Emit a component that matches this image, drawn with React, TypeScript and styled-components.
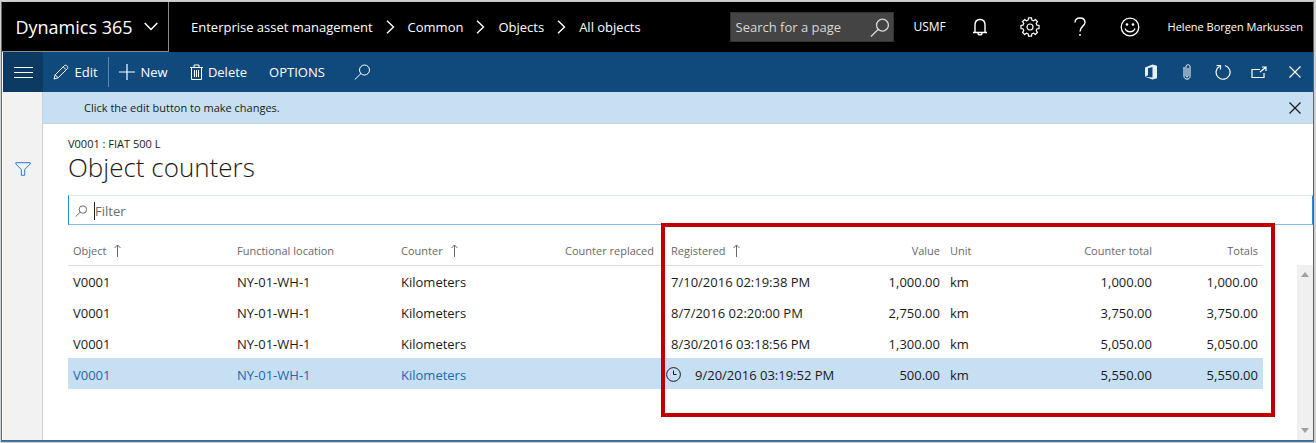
import React from "react";
import styled, { createGlobalStyle, css } from "styled-components";

const Global = createGlobalStyle`
  *, *::before, *::after { box-sizing: border-box; }
  body {
    margin: 0;
    background: #d0d0d0;
    color: #1a1a1a;
    font: 13px/20px "Open Sans", "Noto Sans", "Liberation Sans", sans-serif;
  }
  button, input { font: inherit; color: inherit; }
  svg { display: block; flex: none; }
`;

const Page = styled.div`
  min-height: 100vh;
  display: flex;
  flex-direction: column;
  padding: 1px 2px 2px 1px;
`;

const Window = styled.div`
  flex: 1;
  display: flex;
  flex-direction: column;
  border: 1px solid #5f6368;
  border-left-color: #2b7cc0;
  border-top-color: #c8c8c8;
  background: #fff;
  box-shadow: 0 1px 0 #2b7cc0;
`;

const Header = styled.header`
  display: flex;
  align-items: center;
  height: 50px;
  background: #000;
  color: #fff;
`;

const iconButton = css`
  display: flex;
  align-items: center;
  justify-content: center;
  padding: 0;
  border: 0;
  background: transparent;
  color: inherit;
  cursor: pointer;
`;

const Brand = styled.button`
  ${iconButton}
  width: 167px;
  height: 50px;
  padding-left: 3px;
  gap: 11px;
  border: 1px solid #8a8a8a;
  border-width: 0 1px 1px 0;
  font-size: 18px;
`;

const Crumbs = styled.nav`
  display: flex;
  flex: 1;
  align-items: center;
  gap: 12px;
  padding-left: 22px;
  white-space: nowrap;
`;

const Crumb = styled.a`
  color: inherit;
  text-decoration: none;
`;

const PageSearch = styled.label`
  display: flex;
  align-items: center;
  width: 164px;
  height: 30px;
  padding: 0 4px 0 5px;
  border: 1px solid #333;
  background: #444;
  color: #d8d8d8;
`;

const BareInput = styled.input`
  flex: 1;
  min-width: 0;
  padding: 0;
  border: 0;
  outline: 0;
  background: transparent;
  &::placeholder { color: inherit; opacity: 1; }
`;

const Company = styled.span`
  width: 72px;
  text-align: center;
  font-size: 12px;
`;

const HeaderIcon = styled.button`
  ${iconButton}
  width: 50px;
  height: 50px;
`;

const HeaderIcons = styled.div`
  display: flex;
  margin-left: -11px;
`;

const UserName = styled.span`
  padding: 0 10px 0 13px;
  font-size: 11px;
  white-space: nowrap;
`;

const Toolbar = styled.div`
  display: flex;
  align-items: center;
  height: 40px;
  margin-left: 1px;
  background: #104a7c;
  color: #fff;
`;

const MenuButton = styled.button`
  ${iconButton}
  width: 40px;
  height: 40px;
  background: #0d3a63;
`;

const Command = styled.button<{ $width: number; $divided?: boolean }>`
  ${iconButton}
  width: ${(p) => p.$width}px;
  height: 30px;
  gap: 5px;
  border-right: ${(p) => (p.$divided ? "1px solid #5f86aa" : "0")};
`;

const ToolIcons = styled.div`
  display: flex;
  margin-left: auto;
`;

const ToolIcon = styled.button`
  ${iconButton}
  width: 36px;
  height: 40px;
`;

const Body = styled.div`
  display: flex;
  flex: 1;
  margin-left: 1px;
`;

const Sidebar = styled.aside`
  display: flex;
  flex-direction: column;
  width: 40px;
  padding-top: 67px;
  border-right: 1px solid #cfcfcf;
  background: #f2f2f2;
  color: #2b7cd3;
`;

const SidebarButton = styled.button`
  ${iconButton}
  height: 20px;
`;

const Main = styled.main`
  display: flex;
  flex: 1;
  flex-direction: column;
  min-width: 0;
`;

const Message = styled.div`
  display: flex;
  align-items: center;
  justify-content: space-between;
  height: 32px;
  padding: 0 0 0 41px;
  border-bottom: 1px solid #c9d3da;
  background: #c7dff3;
  font-size: 11px;
`;

const Heading = styled.div`
  padding: 11px 0 0 25px;
`;

const RecordName = styled.div`
  font-size: 11px;
  line-height: 18px;
`;

const Title = styled.h1`
  margin: 0;
  font-size: 26px;
  font-weight: 300;
  line-height: 28px;
`;

const FilterBox = styled.label`
  display: flex;
  align-items: center;
  height: 30px;
  margin: 14px 0 0 25px;
  padding: 1px 0 0 6px;
  gap: 7px;
  border: 1px solid #2b88d8;
  border-top-color: #d4e8f8;
  border-bottom-color: #85bbe6;
  color: #6b6b6b;
`;

const Caret = styled.span`
  width: 1px;
  height: 18px;
  margin-right: -7px;
  background: #222;
`;

const GridArea = styled.section`
  display: flex;
  flex: 1;
  align-items: stretch;
  padding-left: 25px;
`;

const GridFrame = styled.div`
  position: relative;
  flex: 1;
  align-self: flex-start;
  padding-bottom: 28px;
`;

const Highlight = styled.div`
  position: absolute;
  top: -2px;
  right: -12px;
  bottom: 0;
  left: calc(50% - 5px);
  border: 4px solid #c00000;
  pointer-events: none;
`;

const Grid = styled.table`
  width: 100%;
  table-layout: fixed;
  border-collapse: collapse;
`;

const HeadCell = styled.th<{ $right?: boolean }>`
  height: 40px;
  padding: 12px 5px 0;
  border-bottom: 1px solid #dcdcdc;
  color: #686868;
  font-size: 11px;
  font-weight: 400;
  text-align: ${(p) => (p.$right ? "right" : "left")};
  white-space: nowrap;
`;

const HeadLabel = styled.span`
  display: inline-flex;
  align-items: center;
  gap: 8px;
`;

const Cell = styled.td<{ $right?: boolean; $link?: boolean }>`
  height: 31px;
  padding: 2px 5px 0;
  color: ${(p) => (p.$link ? "#1d68b0" : "inherit")};
  text-align: ${(p) => (p.$right ? "right" : "left")};
  white-space: nowrap;
`;

const Row = styled.tr<{ $selected?: boolean }>`
  background: ${(p) => (p.$selected ? "#c7dff3" : "transparent")};
`;

const Stamp = styled.span`
  display: flex;
  align-items: center;
  gap: 14px;
  margin-left: -5px;
`;

const ScrollTrack = styled.div`
  display: flex;
  flex-direction: column;
  justify-content: space-between;
  align-items: center;
  width: 16px;
  margin: 40px 0 0 34px;
  padding: 7px 0;
  background: #f0f0f0;
  color: #a0a0a0;
`;

type IconProps = { d: string; w?: number; h?: number; sw?: number; box?: string };
const Icon = ({ d, w = 16, h = w, sw = 1, box }: IconProps) => (
  <svg width={w} height={h} viewBox={box || `0 0 ${w} ${h}`} fill="none" stroke="currentColor" strokeWidth={sw} aria-hidden="true">
    <path d={d} />
  </svg>
);

const lens = "M10.500 1a5 5 0 1 1 0 10a5 5 0 0 1 0-10M7 9.500L.8 15.500";

const Gear = () => {
  const points: string[] = [];
  for (let i = 0; i < 8; i++) {
    [[-14, 7.200], [-10, 9.200], [10, 9.200], [14, 7.200]].forEach(([offset, radius]) => {
      const angle = ((i * 45 + offset) * Math.PI) / 180;
      points.push(`${(10 + radius * Math.sin(angle)).toFixed(2)},${(10 - radius * Math.cos(angle)).toFixed(2)}`);
    });
  }
  return (
    <svg width="20" height="20" viewBox="0 0 20 20" fill="none" stroke="currentColor" strokeWidth="1.200" strokeLinejoin="round" aria-hidden="true">
      <polygon points={points.join(" ")} />
      <circle cx="10" cy="10" r="3" />
    </svg>
  );
};

const Smile = () => (
  <svg width="20" height="20" viewBox="0 0 20 20" fill="none" stroke="currentColor" strokeWidth="1.300" aria-hidden="true">
    <circle cx="10" cy="10" r="8.800" />
    <path d="M5 11.500c1.500 4.300 8.500 4.300 10 0" />
    <circle cx="7" cy="7.500" r="1.300" fill="currentColor" stroke="none" />
    <circle cx="13" cy="7.500" r="1.300" fill="currentColor" stroke="none" />
  </svg>
);

const Office = () => (
  <svg width="14" height="16" viewBox="0 0 14 16" fill="#e4f0fa" aria-hidden="true">
    <path fillRule="evenodd" d="M1 3.500L8.500.5L13 1.800V14.200L8.500 15.500L1 12.800L8.500 13.500V3L4 4.200V11.300L1 12.800Z" />
  </svg>
);

const columns = [
  { label: "Object", width: 164, sort: true },
  { label: "Functional location", width: 164 },
  { label: "Counter", width: 164, sort: true },
  { label: "Counter replaced", width: 106 },
  { label: "Registered", width: 174, sort: true },
  { label: "Value", width: 105, right: true },
  { label: "Unit", width: 106 },
  { label: "Counter total", width: 106, right: true },
  { label: "Totals", width: 106, right: true },
];

const rows = [
  { date: "7/10/2016 02:19:38 PM", value: "1,000.00", total: "1,000.00" },
  { date: "8/7/2016 02:20:00 PM", value: "2,750.00", total: "3,750.00" },
  { date: "8/30/2016 03:18:56 PM", value: "1,300.00", total: "5,050.00" },
  { date: "9/20/2016 03:19:52 PM", value: "500.00", total: "5,550.00", selected: true },
];

const crumbs = ["Enterprise asset management", "Common", "Objects", "All objects"];

export default function App() {
  return (
    <Page>
      <Global />
      <Window>
        <Header>
          <Brand>
            Dynamics 365
            <Icon w={14} h={9} sw={1.5} d="M.7 1L7 7.500L13.300 1" />
          </Brand>
          <Crumbs aria-label="Breadcrumb">
            {crumbs.map((name, i) => (
              <React.Fragment key={name}>
                {i > 0 && <Icon w={11} h={14} sw={1.4} d="M2 .8L8.500 7L2 13.200" />}
                <Crumb href="#">{name}</Crumb>
              </React.Fragment>
            ))}
          </Crumbs>
          <PageSearch>
            <BareInput placeholder="Search for a page" aria-label="Search for a page" />
            <Icon w={19} sw={1.1} box="0 0 16 16" d={lens} />
          </PageSearch>
          <Company>USMF</Company>
          <HeaderIcons>
            <HeaderIcon aria-label="Notifications">
              <Icon w={16} h={18} sw={1.4} d="M1 14.500H15M3 14.500V7C3 3.500 5 1.500 8 1.500S13 3.500 13 7V14.500M6 15C6 17.500 10 17.500 10 15" />
            </HeaderIcon>
            <HeaderIcon aria-label="Settings"><Gear /></HeaderIcon>
            <HeaderIcon aria-label="Help">
              <Icon w={12} h={20} sw={1.4} d="M1 5.500C1 2.500 3 1 6 1S11 2.500 11 5.500C11 9 6 9.500 6 14.500M6 17V19" />
            </HeaderIcon>
            <HeaderIcon aria-label="Feedback"><Smile /></HeaderIcon>
          </HeaderIcons>
          <UserName>Helene Borgen Markussen</UserName>
        </Header>
        <Toolbar>
          <MenuButton aria-label="Menu"><Icon w={19} h={12} d="M0 1.500H19M0 6.500H19M0 11.500H19" /></MenuButton>
          <Command $width={66} $divided>
            <Icon w={16} d="M1 15L2.200 10.800L11.500 1.500C13 .3 15.600 3 14.500 4.500L5.200 13.800ZM2.200 10.800L5.200 13.800M10.200 2.800L13.200 5.800" />
            Edit
          </Command>
          <Command $width={69}><Icon w={16} sw={1.2} d="M0 8H16M8 0V16" />New</Command>
          <Command $width={81}>
            <Icon w={13} h={16} d="M0 3.500H13M4 3V1H9V3M1.500 4V15.500H11.500V4M4.500 6V13M6.500 6V13M8.500 6V13" />
            Delete
          </Command>
          <Command $width={76}>OPTIONS</Command>
          <Command $width={54} aria-label="Search"><Icon w={16} d={lens} /></Command>
          <ToolIcons>
            <ToolIcon aria-label="Open in Office"><Office /></ToolIcon>
            <ToolIcon aria-label="Attachments"><Icon w={8} h={16} d="M1 3V12.500C1 16 7 16 7 12.500V2.500C7 .2 3 .2 3 2.500V12C3 13.300 5 13.300 5 12V4" /></ToolIcon>
            <ToolIcon aria-label="Refresh"><Icon w={16} sw={1.2} d="M10 1.500A7 7 0 1 1 4.500 2.200M1.500 1.500H5.500V5.500" /></ToolIcon>
            <ToolIcon aria-label="Open in new window"><Icon w={16} h={13} sw={1.2} d="M9 3.500H1V11.500H13V7M9 6L14.500 1.500M11 1H15V5" /></ToolIcon>
            <ToolIcon aria-label="Close"><Icon w={12} sw={1.2} d="M.5 .5L11.500 11.500M11.500 .5L.5 11.500" /></ToolIcon>
          </ToolIcons>
        </Toolbar>
        <Body>
          <Sidebar>
            <SidebarButton aria-label="Filters"><Icon w={16} h={14} d="M.8 .7H15.200V2L9.700 7.500V13.300H6.300V7.500L.8 2Z" /></SidebarButton>
          </Sidebar>
          <Main>
            <Message>
              Click the edit button to make changes.
              <ToolIcon aria-label="Dismiss"><Icon w={12} sw={1.2} d="M.5 .5L11.500 11.500M11.500 .5L.5 11.500" /></ToolIcon>
            </Message>
            <Heading>
              <RecordName>V0001 : FIAT 500 L</RecordName>
              <Title>Object counters</Title>
            </Heading>
            <FilterBox>
              <Icon w={12} sw={1.3} box="0 0 16 16" d={lens} />
              <Caret />
              <BareInput placeholder="Filter" aria-label="Filter" />
            </FilterBox>
            <GridArea>
              <GridFrame>
                <Grid>
                  <colgroup>
                    {columns.map((c) => <col key={c.label} width={c.width} />)}
                  </colgroup>
                  <thead>
                    <tr>
                      {columns.map((c) => (
                        <HeadCell key={c.label} $right={c.right} scope="col">
                          <HeadLabel>
                            {c.label}
                            {c.sort && <Icon w={7} h={13} d="M3.500 13V1M.5 4L3.500 1L6.500 4" />}
                          </HeadLabel>
                        </HeadCell>
                      ))}
                    </tr>
                  </thead>
                  <tbody>
                    {rows.map((r) => (
                      <Row key={r.date} $selected={r.selected}>
                        <Cell $link={r.selected}>V0001</Cell>
                        <Cell $link={r.selected}>NY-01-WH-1</Cell>
                        <Cell $link={r.selected}>Kilometers</Cell>
                        <Cell />
                        <Cell>
                          {r.selected ? (
                            <Stamp>
                              <Icon w={15} d="M7.500 .6a6.900 6.900 0 1 1 0 13.800a6.900 6.900 0 0 1 0-13.800M7.500 3.500V7.500H10.500" />
                              {r.date}
                            </Stamp>
                          ) : r.date}
                        </Cell>
                        <Cell $right>{r.value}</Cell>
                        <Cell>km</Cell>
                        <Cell $right>{r.total}</Cell>
                        <Cell $right>{r.total}</Cell>
                      </Row>
                    ))}
                  </tbody>
                </Grid>
                <Highlight />
              </GridFrame>
              <ScrollTrack aria-hidden="true">
                <svg width="8" height="5" fill="currentColor"><path d="M0 5L4 0L8 5Z" /></svg>
                <svg width="8" height="5" fill="currentColor"><path d="M0 0L4 5L8 0Z" /></svg>
              </ScrollTrack>
            </GridArea>
          </Main>
        </Body>
      </Window>
    </Page>
  );
}
